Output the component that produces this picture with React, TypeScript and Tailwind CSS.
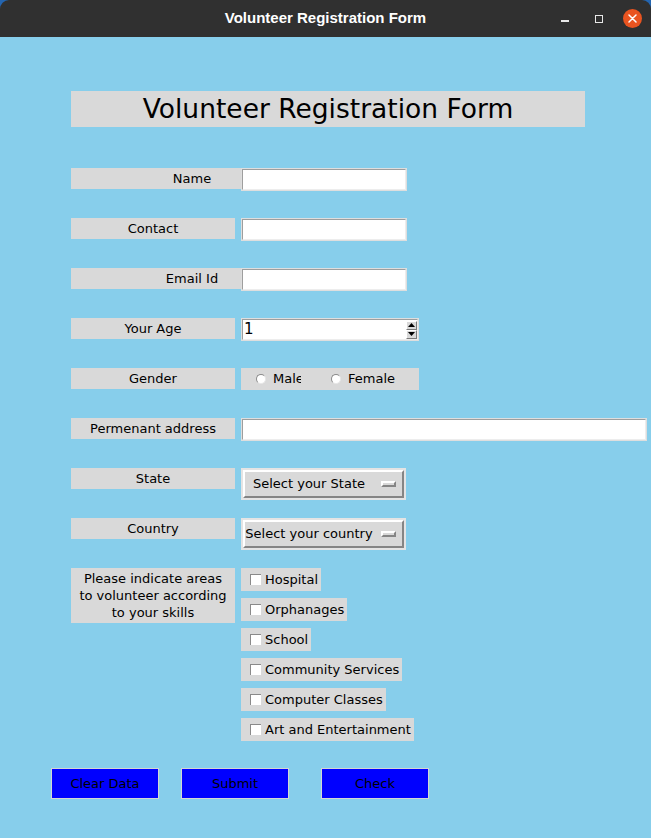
import React from "react";

const font = { fontFamily: '"DejaVu Sans", "Liberation Sans", sans-serif' };

function Entry({ className }: { className: string }) {
  return (
    <div className={`h-[23px] border border-[#dedede] ${className}`}>
      <div className="h-full bg-white border-t border-l border-t-[#9e9e9e] border-l-[#9e9e9e] border-b border-r border-b-[#ededed] border-r-[#ededed]" />
    </div>
  );
}

function Label({ text, wide }: { text: string; wide?: boolean }) {
  if (wide) {
    return (
      <div className="w-[170px] h-[21px] bg-[#d9d9d9] overflow-hidden">
        <div className="w-[242px] h-[21px] leading-[21px] text-center whitespace-nowrap">{text}</div>
      </div>
    );
  }
  return (
    <div className="w-[164px] h-[21px] leading-[21px] bg-[#d9d9d9] text-center whitespace-nowrap mr-[6px]">{text}</div>
  );
}

function Row({ children }: { children: React.ReactNode }) {
  return <div className="h-[50px] flex items-start">{children}</div>;
}

function MenuButton({ text }: { text: string }) {
  return (
    <div className="w-[165px] h-[32px] border-2 border-[#e4e4e4]">
      <div className="h-full flex items-center bg-[#d9d9d9] border-2 border-t-white border-l-white border-b-[#858585] border-r-[#858585]">
        <span className="w-[128px] text-center whitespace-nowrap">{text}</span>
        <span className="ml-[8px] w-[15px] h-[6px] bg-[#d9d9d9] border-t-2 border-l-2 border-t-white border-l-white border-b-2 border-r-2 border-b-[#858585] border-r-[#858585]" />
      </div>
    </div>
  );
}

function Arrow({ up }: { up?: boolean }) {
  return (
    <div className="w-[11px] h-[9px] bg-[#d9d9d9] border border-t-white border-l-white border-b-[#7a7a7a] border-r-[#7a7a7a] flex items-center justify-center">
      <svg width="7" height="4" viewBox="0 0 7 4">
        {up ? <polygon points="0,4 7,4 3.5,0" fill="#000" /> : <polygon points="0,0 7,0 3.5,4" fill="#000" />}
      </svg>
    </div>
  );
}

function Radio() {
  return <span className="inline-block w-[10px] h-[10px] rounded-full bg-white border border-t-[#8a8a8a] border-l-[#8a8a8a] border-b-[#e6e6e6] border-r-[#e6e6e6] shrink-0" />;
}

function Check({ text }: { text: string }) {
  return (
    <div className="h-[23px] bg-[#d9d9d9] flex items-center pl-[9px] pr-[3px] self-start">
      <span className="w-[11px] h-[11px] bg-white border-t border-l border-t-[#8a8a8a] border-l-[#8a8a8a] shrink-0" />
      <span className="ml-[4px] whitespace-nowrap">{text}</span>
    </div>
  );
}

function Btn({ text, className }: { text: string; className?: string }) {
  return (
    <div className={`w-[108px] h-[31px] border border-[#d4d4d4] bg-[#0000ff] flex items-center justify-center text-black ${className ?? ""}`}>
      {text}
    </div>
  );
}

export default function App() {
  return (
    <div className="w-[651px] h-[838px] bg-[#87ceeb] text-[13px] text-black overflow-hidden" style={font}>
      <div className="bg-[#2465b0]">
        <div className="h-[37px] bg-[#303030] rounded-t-[9px] grid grid-cols-[1fr_auto_1fr] items-center">
          <div />
          <div className="text-white font-bold text-[15px] whitespace-nowrap" style={{ fontFamily: '"Liberation Sans", sans-serif' }}>
            Volunteer Registration Form
          </div>
          <div className="flex items-center justify-end pr-[9px]">
            <span className="w-[8px] h-[2px] bg-[#e8e8e8] mt-[4px]" />
            <span className="ml-[26px] w-[8px] h-[8px] border border-[#e8e8e8]" />
            <span className="ml-[20px] w-[19px] h-[19px] rounded-full bg-[#e95420] flex items-center justify-center">
              <svg width="9" height="9" viewBox="0 0 9 9">
                <path d="M1 1 L8 8 M8 1 L1 8" stroke="#fff" strokeWidth="1.5" strokeLinecap="round" />
              </svg>
            </span>
          </div>
        </div>
      </div>

      <div className="pt-[54px] pl-[71px]">
        <div className="w-[514px] h-[36px] bg-[#d9d9d9] flex items-center justify-center text-[26.5px] whitespace-nowrap">
          Volunteer Registration Form
        </div>

        <div className="mt-[41px] flex flex-col">
          <Row>
            <Label text="Name" wide />
            <Entry className="w-[166px]" />
          </Row>
          <Row>
            <Label text="Contact" />
            <Entry className="w-[166px]" />
          </Row>
          <Row>
            <Label text="Email Id" wide />
            <Entry className="w-[166px]" />
          </Row>
          <Row>
            <Label text="Your Age" />
            <div className="w-[178px] h-[23px] border border-[#dedede]">
              <div className="h-full bg-white border-t border-l border-t-[#9e9e9e] border-l-[#9e9e9e] border-b border-r border-b-[#ededed] border-r-[#ededed] flex items-center">
                <span className="flex-1 pl-[1px] text-[15px] leading-none">1</span>
                <div className="flex flex-col">
                  <Arrow up />
                  <Arrow />
                </div>
              </div>
            </div>
          </Row>
          <Row>
            <Label text="Gender" />
            <div className="w-[178px] h-[22px] bg-[#d9d9d9] flex items-center">
              <div className="w-[60px] overflow-hidden flex items-center pl-[15px] whitespace-nowrap">
                <Radio />
                <span className="ml-[7px]">Male</span>
              </div>
              <div className="ml-[30px] flex items-center whitespace-nowrap">
                <Radio />
                <span className="ml-[7px]">Female</span>
              </div>
            </div>
          </Row>
          <Row>
            <Label text="Permenant address" />
            <Entry className="w-[406px]" />
          </Row>
          <Row>
            <Label text="State" />
            <MenuButton text="Select your State" />
          </Row>
          <Row>
            <Label text="Country" />
            <MenuButton text="Select your country" />
          </Row>
          <div className="flex items-start">
            <div className="w-[164px] mr-[6px] bg-[#d9d9d9] text-center leading-[17px] py-[2px]">
              Please indicate areas
              <br />
              to volunteer according
              <br />
              to your skills
            </div>
            <div className="flex flex-col gap-[7px]">
              <Check text="Hospital" />
              <Check text="Orphanages" />
              <Check text="School" />
              <Check text="Community Services" />
              <Check text="Computer Classes" />
              <Check text="Art and Entertainment" />
            </div>
          </div>
        </div>
      </div>

      <div className="mt-[27px] pl-[51px] flex">
        <Btn text="Clear Data" />
        <Btn text="Submit" className="ml-[22px]" />
        <Btn text="Check" className="ml-[32px]" />
      </div>
    </div>
  );
}
